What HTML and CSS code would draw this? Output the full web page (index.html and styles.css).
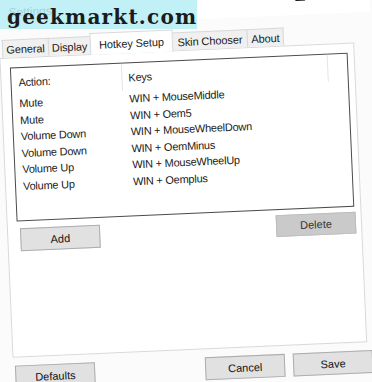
FILE: index.html
```html
<!DOCTYPE html>
<html lang="en">
<head>
    <meta charset="UTF-8">
    <meta name="viewport" content="width=device-width, initial-scale=1.0">
    <title>Settings</title>
    <link rel="stylesheet" href="styles.css">
</head>
<body>

<div class="watermark">geekmarkt.com</div>

<div class="window">
    <div class="titlebar">
        <span class="title">Settings</span>
        <div class="controls">
            <span class="ctl">
                <svg width="10" height="10" viewBox="0 0 10 10"><path d="M0 5.5h10" stroke="#111" stroke-width="1"/></svg>
            </span>
            <span class="ctl">
                <svg width="10" height="10" viewBox="0 0 10 10"><rect x="0.5" y="0.5" width="9" height="9" fill="none" stroke="#111" stroke-width="1"/></svg>
            </span>
            <span class="ctl">
                <svg width="10" height="10" viewBox="0 0 10 10"><path d="M0 0L10 10M10 0L0 10" stroke="#111" stroke-width="1"/></svg>
            </span>
        </div>
    </div>

    <div class="tabcontrol">
        <div class="tabs">
            <div class="tab tab-general">General</div>
            <div class="tab tab-display">Display</div>
            <div class="tab tab-hotkey active">Hotkey Setup</div>
            <div class="tab tab-skin">Skin Chooser</div>
            <div class="tab tab-about">About</div>
        </div>
        <div class="panel">
            <div class="listview">
                <div class="lv-header">
                    <div class="col col-action">Action:</div>
                    <div class="col col-keys">Keys</div>
                </div>
                <div class="lv-body">
                    <div class="lv-row"><div class="col col-action">Mute</div><div class="col col-keys">WIN + MouseMiddle</div></div>
                    <div class="lv-row"><div class="col col-action">Mute</div><div class="col col-keys">WIN + Oem5</div></div>
                    <div class="lv-row"><div class="col col-action">Volume Down</div><div class="col col-keys">WIN + MouseWheelDown</div></div>
                    <div class="lv-row"><div class="col col-action">Volume Down</div><div class="col col-keys">WIN + OemMinus</div></div>
                    <div class="lv-row"><div class="col col-action">Volume Up</div><div class="col col-keys">WIN + MouseWheelUp</div></div>
                    <div class="lv-row"><div class="col col-action">Volume Up</div><div class="col col-keys">WIN + Oemplus</div></div>
                </div>
            </div>
            <div class="list-buttons">
                <button class="btn btn-add">Add</button>
                <button class="btn btn-disabled" disabled>Delete</button>
            </div>
        </div>
    </div>

    <div class="footer">
        <button class="btn">Defaults</button>
        <div class="footer-right">
            <button class="btn">Cancel</button>
            <button class="btn">Save</button>
        </div>
    </div>
</div>

</body>
</html>
```

FILE: styles.css
```css
body, html {
    margin: 0;
    padding: 0;
    height: 100%;
    overflow: hidden;
    background-color: #fbfbfb;
}
.watermark {
    position: absolute;
    left: 0;
    top: 0;
    width: 197px;
    height: 29px;
    box-sizing: border-box;
    padding: 6px 0 0 7px;
    background-color: rgba(176, 236, 244, 0.78);
    font-family: "DejaVu Serif", serif;
    font-weight: bold;
    font-size: 20px;
    line-height: 23px;
    letter-spacing: 1.2px;
    color: #1b1b1b;
    white-space: nowrap;
    z-index: 2;
}
.window {
    width: 372px;
    height: 382px;
    transform: rotate(-2.5deg);
    background-color: #fbfbfb;
    font-family: "Liberation Sans", Arial, sans-serif;
    font-size: 11px;
    color: #1a1a1a;
}
.titlebar {
    display: flex;
    align-items: center;
    height: 30px;
    margin: -10px -5px 0 0;
    background-color: #fff;
}
.title {
    padding-left: 16px;
    font-size: 12px;
    color: #7a7a7a;
}
.controls {
    display: flex;
    align-self: flex-start;
    margin-left: auto;
}
.ctl {
    width: 46px;
    height: 22px;
    display: flex;
    align-items: center;
    justify-content: center;
}
.tabcontrol {
    margin: 9px 12px 0 5px;
}
.tabs {
    display: flex;
    align-items: flex-end;
    height: 21px;
    padding-left: 3px;
}
.tab {
    height: 18px;
    box-sizing: border-box;
    border: 1px solid #d9d9d9;
    border-bottom: none;
    margin-right: -1px;
    background-color: #f0f0f0;
    display: flex;
    align-items: center;
    justify-content: center;
    letter-spacing: -0.1px;
    white-space: nowrap;
}
.tab.active {
    height: 22px;
    margin-bottom: -1px;
    background-color: #fff;
    position: relative;
    z-index: 1;
}
.tab-general { width: 47px; }
.tab-display { width: 43px; }
.tab-hotkey { width: 83px; }
.tab-skin { width: 76px; }
.tab-about { width: 37px; }
.panel {
    height: 300px;
    box-sizing: border-box;
    border: 1px solid #d9d9d9;
    background-color: #fff;
    padding: 9px 6px 0 9px;
}
.listview {
    height: 154px;
    box-sizing: border-box;
    border: 1px solid #4a4a4a;
    background-color: #fff;
    letter-spacing: -0.25px;
}
.lv-header {
    display: flex;
    height: 27px;
    line-height: 29px;
    color: #222;
}
.lv-header .col {
    border-right: 1px solid #e5e5e5;
    box-sizing: border-box;
}
.lv-row {
    display: flex;
    height: 16.6px;
    line-height: 16.6px;
}
.col {
    white-space: nowrap;
}
.col-action {
    width: 111px;
    padding-left: 7px;
    box-sizing: border-box;
}
.col-keys {
    width: 206px;
    padding-left: 6px;
    box-sizing: border-box;
}
.list-buttons {
    display: flex;
    justify-content: space-between;
    align-items: flex-start;
    margin: 5px -1px 0 0;
    padding-left: 3px;
}
.btn {
    width: 80px;
    height: 23px;
    padding: 0;
    border: 1px solid #adadad;
    background-color: #e1e1e1;
    font-family: inherit;
    font-size: 11px;
    color: #111;
}
.btn-add {
    margin-top: 2px;
}
.btn-disabled {
    height: 22px;
    border-color: #bdbdbd;
    background-color: #cacaca;
    color: #333;
}
.footer {
    display: flex;
    margin: 8px 7px 0 7px;
}
.footer-right {
    display: flex;
    gap: 8px;
    margin-left: auto;
}
```
